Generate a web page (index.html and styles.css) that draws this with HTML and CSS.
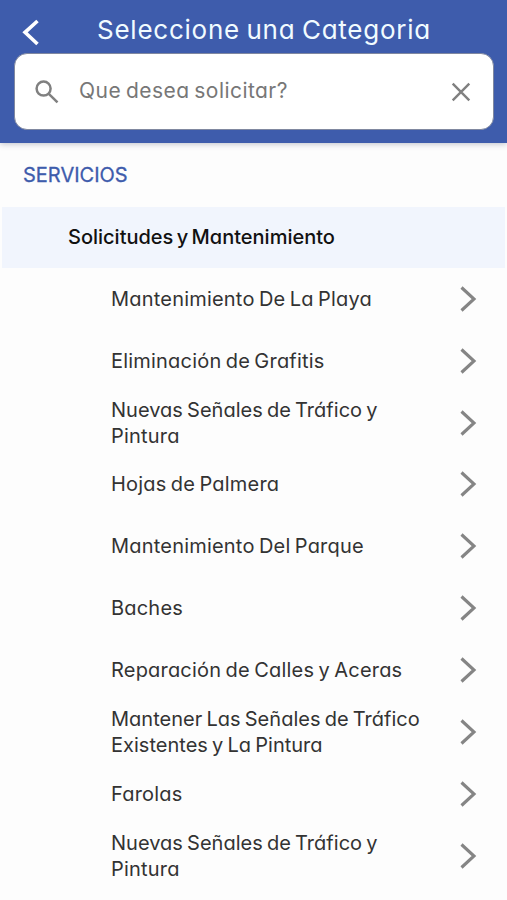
FILE: index.html
```html
<!DOCTYPE html>
<html lang="es">
<head>
<meta charset="utf-8">
<title>Seleccione una Categoria</title>
<link rel="stylesheet" href="styles.css">
</head>
<body>
<header class="header">
  <div class="bar">
    <svg class="back" viewBox="0 0 18 28"><path d="M15.5 3 3 14.3 15.5 26"/></svg>
    <h1 class="title">Seleccione una Categoria</h1>
  </div>
  <div class="search">
    <svg class="lens" viewBox="0 0 24 24"><circle cx="8.6" cy="8.6" r="7"/><path d="m13.8 13.8 8.7 8.5"/></svg>
    <span class="placeholder">Que desea solicitar?</span>
    <svg class="clear" viewBox="0 0 20 20"><path d="m1.7 1.7 16.6 16.6M18.3 1.7 1.7 18.3"/></svg>
  </div>
</header>
<main>
  <h2 class="section">SERVICIOS</h2>
  <h3 class="group">Solicitudes y Mantenimiento</h3>
  <ul class="list">
    <li class="row"><span>Mantenimiento De La Playa</span><svg class="chev" viewBox="0 0 18 28"><path d="M2.5 2.5 15 14 2.5 25.5"/></svg></li>
    <li class="row"><span>Eliminación de Grafitis</span><svg class="chev" viewBox="0 0 18 28"><path d="M2.5 2.5 15 14 2.5 25.5"/></svg></li>
    <li class="row"><span><span class="tight">Nuevas Señales de Tráfico y</span><br>Pintura</span><svg class="chev" viewBox="0 0 18 28"><path d="M2.5 2.5 15 14 2.5 25.5"/></svg></li>
    <li class="row"><span>Hojas de Palmera</span><svg class="chev" viewBox="0 0 18 28"><path d="M2.5 2.5 15 14 2.5 25.5"/></svg></li>
    <li class="row"><span>Mantenimiento Del Parque</span><svg class="chev" viewBox="0 0 18 28"><path d="M2.5 2.5 15 14 2.5 25.5"/></svg></li>
    <li class="row"><span>Baches</span><svg class="chev" viewBox="0 0 18 28"><path d="M2.5 2.5 15 14 2.5 25.5"/></svg></li>
    <li class="row"><span>Reparación de Calles y Aceras</span><svg class="chev" viewBox="0 0 18 28"><path d="M2.5 2.5 15 14 2.5 25.5"/></svg></li>
    <li class="row"><span class="tight">Mantener Las Señales de Tráfico<br>Existentes y La Pintura</span><svg class="chev" viewBox="0 0 18 28"><path d="M2.5 2.5 15 14 2.5 25.5"/></svg></li>
    <li class="row"><span>Farolas</span><svg class="chev" viewBox="0 0 18 28"><path d="M2.5 2.5 15 14 2.5 25.5"/></svg></li>
    <li class="row"><span><span class="tight">Nuevas Señales de Tráfico y</span><br>Pintura</span><svg class="chev" viewBox="0 0 18 28"><path d="M2.5 2.5 15 14 2.5 25.5"/></svg></li>
  </ul>
</main>
</body>
</html>
```
FILE: styles.css
```css
* { box-sizing: border-box; }
body {
  margin: 0;
  height: 900px;
  overflow: hidden;
  background: #fdfdfd;
  color: #333;
  font-family: Inter, "Liberation Sans", sans-serif;
  font-feature-settings: "cv11";
  font-size: 20px;
}
h1, h2, h3, ul { margin: 0; padding: 0; font-weight: 400; }
svg { display: block; flex: none; fill: none; }
.header {
  height: 143px;
  padding: 0 13px 0 14px;
  background: #3e5cac;
  box-shadow: 0 1px 6px rgba(40, 50, 80, .3);
}
.bar { display: flex; height: 53px; padding: 18px 0 0 8px; }
.back { width: 18px; height: 28px; stroke: #fff; stroke-width: 3.6; }
.title {
  margin-left: 57px;
  font-size: 26px;
  line-height: 24px;
  font-weight: 400;
  letter-spacing: .75px;
  word-spacing: -1.5px;
  color: #f1fbff;
  white-space: nowrap;
}
.search {
  display: flex;
  align-items: center;
  height: 77px;
  padding: 0 22px 0 20px;
  border: 1px solid #8088a0;
  border-radius: 13px;
  background: #fff;
  stroke: #808080;
}
.lens { width: 24px; height: 24px; stroke-width: 2.5; }
.placeholder {
  flex: 1;
  margin-left: 20px;
  padding-bottom: 2px;
  color: #777;
  font-size: 21px;
  line-height: 26px;
  letter-spacing: .45px;
  word-spacing: -1.5px;
  white-space: nowrap;
}
.clear { width: 20px; height: 20px; stroke-width: 2.4; }
.section {
  height: 64px;
  padding-left: 23px;
  font-size: 20px;
  line-height: 64px;
  color: #3e5cac;
  -webkit-text-stroke: .3px;
}
.group {
  height: 61px;
  margin: 0 2px;
  padding-left: 66px;
  background: #f1f5fd;
  color: #111;
  font-size: 20px;
  font-weight: 500;
  line-height: 60px;
  word-spacing: -2px;
  white-space: nowrap;
}
.list { list-style: none; }
.row {
  display: flex;
  align-items: center;
  justify-content: space-between;
  height: 61.85px;
  padding: 0 30px 0 111px;
  line-height: 26px;
  letter-spacing: .2px;
  word-spacing: -1.5px;
  white-space: nowrap;
}
.tight { letter-spacing: .02px; }
.chev { width: 18px; height: 28px; stroke: #858585; stroke-width: 3.1; }
```
